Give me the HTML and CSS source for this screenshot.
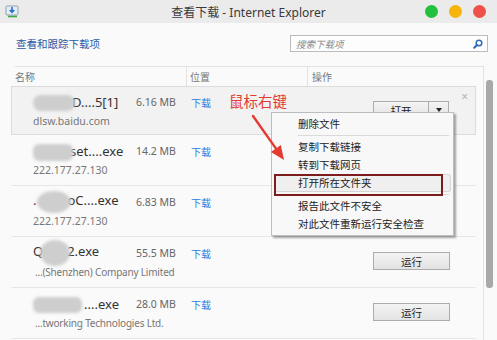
FILE: index.html
```html
<!DOCTYPE html>
<html>
<head>
  <meta charset="utf-8">
  <link rel="stylesheet" href="styles.css">
</head>
<body>
  <div class="window">
    <div class="titlebar">
      <svg class="app-icon" viewBox="0 0 15 15">
        <rect x="1" y="2" width="12" height="9" rx="1" fill="#e4edf4" stroke="#8fa3b3" stroke-width="1"/>
        <path d="M7 3v5M4.8 6l2.2 2.4L9.2 6" fill="none" stroke="#2a6fd0" stroke-width="1.6"/>
        <path d="M3 12.5h9" stroke="#3aa843" stroke-width="1.6"/>
      </svg>
      <div class="title">查看下载 - Internet Explorer</div>
      <div class="dots">
        <span class="dot dot-green"></span>
        <span class="dot dot-yellow"></span>
        <span class="dot dot-red"></span>
      </div>
    </div>

    <div class="toolbar">
      <span class="track-link">查看和跟踪下载项</span>
      <div class="search">
        <span class="search-ph">搜索下载项</span>
        <svg class="search-icon" viewBox="0 0 10 10">
          <circle cx="6" cy="4" r="2.8" fill="none" stroke="#2c69b5" stroke-width="1.5"/>
          <path d="M4 6L1.2 8.8" stroke="#2c69b5" stroke-width="2" stroke-linecap="round"/>
        </svg>
      </div>
    </div>

    <div class="content">
      <div class="list">
        <div class="colhead">
          <div class="c-name">名称</div>
          <div class="c-loc">位置</div>
          <div class="c-act">操作</div>
        </div>

        <div class="row sel">
          <div class="info">
            <div class="line1">
              <div class="fname"><span class="blot blot-1"></span>D....5[1]</div>
              <div class="fsize">6.16 MB</div>
              <div class="floc">下载</div>
            </div>
            <div class="sub">dlsw.baidu.com</div>
          </div>
          <div class="action">
            <div class="split">
              <div class="btn btn-main">打开</div>
              <div class="btn btn-drop"><span class="caret"></span></div>
            </div>
          </div>
          <div class="close">×</div>
        </div>

        <div class="row">
          <div class="info">
            <div class="line1">
              <div class="fname"><span class="blot blot-2"></span>set....exe</div>
              <div class="fsize">14.2 MB</div>
              <div class="floc">下载</div>
            </div>
            <div class="sub">222.177.27.130</div>
          </div>
        </div>

        <div class="row">
          <div class="info">
            <div class="line1">
              <div class="fname">.<span class="blot blot-3"></span>oC....exe</div>
              <div class="fsize">6.83 MB</div>
              <div class="floc">下载</div>
            </div>
            <div class="sub">222.177.27.130</div>
          </div>
        </div>

        <div class="row">
          <div class="info">
            <div class="line1">
              <div class="fname">Q<span class="blot blot-4"></span>2.exe</div>
              <div class="fsize">55.5 MB</div>
              <div class="floc">下载</div>
            </div>
            <div class="sub sub-in">...(Shenzhen) Company Limited</div>
          </div>
          <div class="action">
            <div class="btn btn-run">运行</div>
          </div>
        </div>

        <div class="row">
          <div class="info">
            <div class="line1">
              <div class="fname"><span class="blot blot-5"></span>....exe</div>
              <div class="fsize">28.0 MB</div>
              <div class="floc">下载</div>
            </div>
            <div class="sub sub-in">...tworking Technologies Ltd.</div>
          </div>
          <div class="action">
            <div class="btn btn-run">运行</div>
          </div>
        </div>
      </div>
      <div class="scroll"><div class="thumb"></div></div>
    </div>

    <!-- right-click menu over the first row -->
    <div class="ctx">
      <div class="ctx-item">删除文件</div>
      <div class="ctx-sep"></div>
      <div class="ctx-item">复制下载链接</div>
      <div class="ctx-item">转到下载网页</div>
      <div class="ctx-item hl">打开所在文件夹</div>
      <div class="ctx-sep"></div>
      <div class="ctx-item">报告此文件不安全</div>
      <div class="ctx-item">对此文件重新运行安全检查</div>
    </div>

    <div class="note">鼠标右键</div>
    <svg class="note-arrow" viewBox="0 0 42 54">
      <path d="M5 6L28 38.6" stroke="#e53a2f" stroke-width="2.4" stroke-linecap="round"/>
      <polygon points="32.8,35.1 23,42.1 36,50" fill="#e53a2f"/>
    </svg>
  </div>
</body>
</html>
```

FILE: styles.css
```css
/* Global */

* {
  box-sizing: border-box;
}

html, body {
  margin: 0;
  width: 497px;
  height: 340px;
  overflow: hidden;
}

body {
  font-family: "Noto Sans", "Noto Sans CJK SC", sans-serif;
}

.window {
  position: relative;
  width: 497px;
  height: 340px;
  background-color: #fafafa;
  overflow: hidden;
}

/* Title bar */

.titlebar {
  display: grid;
  grid-template-columns: 1fr auto 1fr;
  align-items: center;
  height: 23px;
  background-color: #ebebeb;
}

.app-icon {
  width: 15px;
  height: 15px;
  margin-left: 5px;
}

.title {
  font-size: 12px;
  color: #3a3a3a;
}

.dots {
  justify-self: end;
  display: flex;
  gap: 11px;
  padding-right: 11px;
}

.dot {
  width: 13px;
  height: 13px;
  border-radius: 50%;
}

.dot-green { background-color: #22c13c; }
.dot-yellow { background-color: #f6b50c; }
.dot-red { background-color: #ef5149; }

/* Toolbar */

.toolbar {
  display: flex;
  align-items: center;
  height: 43px;
  padding: 0 9px 2px 16px;
}

.track-link {
  font-size: 10.5px;
  color: #2b5aa5;
}

.search {
  margin-left: auto;
  width: 198px;
  height: 17px;
  border: 1px solid #bcbcbc;
  background-color: #fdfdfd;
  display: flex;
  align-items: center;
  padding: 0 4px 0 5px;
}

.search-ph {
  flex: 1;
  font-size: 9.5px;
  font-style: italic;
  color: #8a8a8a;
}

.search-icon {
  width: 10px;
  height: 10px;
}

/* List */

.content {
  display: flex;
  height: 274px;
}

.list {
  width: 484px;
  border-right: 1px solid #e2e2e2;
  padding-left: 11px;
}

.scroll {
  flex: 1;
  padding: 14px 0 0 2px;
}

.thumb {
  width: 7px;
  height: 208px;
  border-radius: 3px;
  background-color: #a9a9a9;
}

.colhead {
  display: flex;
  align-items: center;
  height: 20px;
  margin-left: 4px;
  border-top: 1px solid #e3e3e3;
  font-size: 10px;
  color: #777;
}

.colhead > div {
  height: 100%;
  display: flex;
  align-items: center;
}

.c-name {
  width: 171px;
}

.c-loc {
  width: 121px;
  border-left: 1px solid #e3e3e3;
  padding-left: 3px;
}

.c-act {
  border-left: 1px solid #e3e3e3;
  padding-left: 4px;
}

.row {
  display: flex;
  width: 465px;
  height: 51px;
  border: 1px solid transparent;
  border-bottom-color: #e6e6e6;
  padding-left: 21px;
}

.row.sel {
  height: 49px;
  background-color: #f2f2f2;
  border-color: #dcdcdc;
}

.info {
  width: 340px;
  padding-top: 6px;
}

.line1 {
  display: flex;
  align-items: center;
  height: 18px;
}

.fname {
  width: 103px;
  font-size: 13px;
  color: #333;
  white-space: nowrap;
}

.fsize {
  width: 55px;
  font-size: 10.5px;
  color: #666;
}

.floc {
  font-size: 10px;
  color: #2b7de0;
}

.sub {
  margin-top: 3px;
  font-size: 10.5px;
  line-height: 14px;
  color: #777;
  white-space: nowrap;
}

.sub-in {
  padding-left: 2px;
  font-size: 10px;
  letter-spacing: -0.2px;
}

/* blurred-out parts of the file names */
.blot {
  display: inline-block;
  vertical-align: middle;
  background-color: #cecece;
  filter: blur(1.5px);
}

.blot-1 { width: 42px; height: 16px; border-radius: 8px; margin-right: -3px; }
.blot-2 { width: 40px; height: 17px; border-radius: 6px; margin-right: -3px; }
.blot-3 { width: 34px; height: 22px; border-radius: 50%; margin: 0 -4px 0 1px; }
.blot-4 { width: 30px; height: 26px; border-radius: 50%; margin: 0 -3px 0 -3px; }
.blot-5 { width: 49px; height: 16px; border-radius: 6px; margin-right: 2px; }

.action {
  margin-top: 14px;
}

.btn {
  height: 18px;
  border: 1px solid #acacac;
  background: linear-gradient(#f3f3f3, #e3e3e3);
  font-size: 10.5px;
  color: #222;
  display: flex;
  align-items: center;
  justify-content: center;
}

.btn-run {
  width: 77px;
}

.split {
  display: flex;
}

.btn-main {
  width: 56px;
}

.btn-drop {
  width: 20px;
  border-left: none;
}

.caret {
  width: 0;
  height: 0;
  border-left: 3.5px solid transparent;
  border-right: 3.5px solid transparent;
  border-top: 4px solid #222;
}

.close {
  margin: 4px 7px 0 auto;
  font-size: 12px;
  line-height: 1;
  color: #b3b3b3;
}

/* Context menu */

.ctx {
  position: absolute;
  left: 271px;
  top: 112px;
  width: 183px;
  padding: 2px 0;
  background-color: #f8f8f8;
  border: 1px solid #bdbdbd;
  box-shadow: 2px 2px 2px rgba(0, 0, 0, 0.35);
  font-size: 10.5px;
  color: #222;
}

.ctx-item {
  position: relative;
  height: 18px;
  line-height: 18px;
  margin: 0 2px;
  padding-left: 24px;
}

.ctx-item.hl {
  background-color: #efefef;
  box-shadow: inset 0 0 0 1px #d6d6d6;
  border-radius: 3px;
}

.ctx-item.hl:after {
  content: '';
  position: absolute;
  left: 0;
  top: 0;
  width: 165px;
  height: 100%;
  border: 2px solid #7c1c1c;
}

.ctx-sep {
  height: 1px;
  margin: 2px 4px 2px 26px;
  background-color: #dadada;
}

/* Annotation */

.note {
  position: absolute;
  left: 229px;
  top: 90px;
  font-size: 14.5px;
  color: #e33b32;
}

.note-arrow {
  position: absolute;
  left: 248px;
  top: 110px;
  width: 42px;
  height: 54px;
}
```
